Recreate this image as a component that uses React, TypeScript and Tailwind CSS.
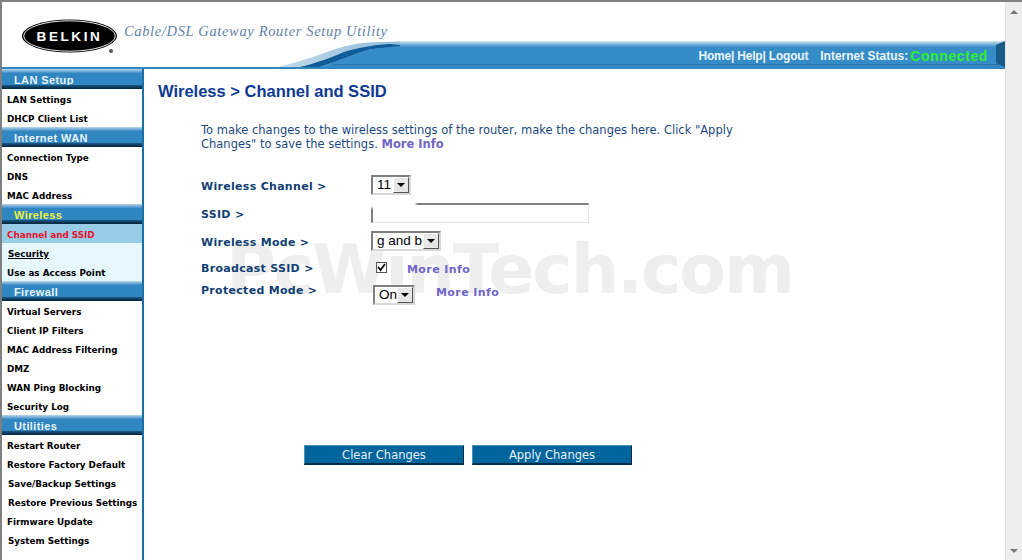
import React from "react";

const verdana = "font-['DejaVu_Sans',sans-serif]";

type Item = { label: string; active?: boolean; underline?: boolean; tint?: boolean; indent?: boolean };

const sections: { title: string; current?: boolean; items: Item[] }[] = [
  { title: "LAN Setup", items: [{ label: "LAN Settings" }, { label: "DHCP Client List" }] },
  {
    title: "Internet WAN",
    items: [{ label: "Connection Type" }, { label: "DNS" }, { label: "MAC Address" }],
  },
  {
    title: "Wireless",
    current: true,
    items: [
      { label: "Channel and SSID", active: true },
      { label: "Security", underline: true, tint: true, indent: true },
      { label: "Use as Access Point", tint: true },
    ],
  },
  {
    title: "Firewall",
    items: [
      { label: "Virtual Servers" },
      { label: "Client IP Filters" },
      { label: "MAC Address Filtering" },
      { label: "DMZ" },
      { label: "WAN Ping Blocking" },
      { label: "Security Log" },
    ],
  },
  {
    title: "Utilities",
    items: [
      { label: "Restart Router" },
      { label: "Restore Factory Default" },
      { label: "Save/Backup Settings", indent: true },
      { label: "Restore Previous Settings", indent: true },
      { label: "Firmware Update" },
      { label: "System Settings", indent: true },
    ],
  },
];

function SectionHeader({ title, current }: { title: string; current?: boolean }) {
  return (
    <div className="h-[20px] flex flex-col">
      <div className="h-[4px] bg-gradient-to-b from-[#b9d6ea] to-[#3a8cc6]" />
      <div
        className={`h-[12px] bg-[#2f86c0] pl-[12px] pt-[2px] flex items-center font-['Liberation_Sans',sans-serif] font-bold text-[11px] tracking-[0.4px] ${
          current ? "text-[#f2f53c]" : "text-[#e8f3fa]"
        }`}
      >
        {title}
      </div>
      <div className="h-[4px] bg-gradient-to-b from-[#1a5a86] to-[#04233a]" />
    </div>
  );
}

function NavItem({ label, active, underline, tint, indent }: Item) {
  return (
    <div
      className={`h-[19px] pt-[4px] flex items-center whitespace-nowrap text-[8.8px] font-bold leading-none ${verdana} ${
        indent ? "pl-[6px]" : "pl-[5px]"
      } ${active ? "bg-[#98cbe6] text-[#e8102a]" : tint ? "bg-[#e6f7fe] text-black" : "bg-white text-black"} ${
        underline ? "underline" : ""
      }`}
    >
      {label}
    </div>
  );
}

function FakeSelect({ value, w }: { value: string; w: string }) {
  return (
    <div
      className={`h-[20px] ${w} flex items-center justify-between border-2 border-t-[#808080] border-l-[#808080] border-r-[#d8d8d8] border-b-[#d8d8d8] bg-white pl-[4px] font-['Liberation_Sans',sans-serif] text-[13.5px] text-black`}
    >
      <span className="leading-none">{value}</span>
      <span className="w-[16px] h-[16px] bg-[#e6e6e6] border border-t-white border-l-white border-r-[#555] border-b-[#555] flex items-center justify-center">
        <svg width="8" height="4" viewBox="0 0 8 4">
          <path d="M0 0h8L4 4z" fill="#000" />
        </svg>
      </span>
    </div>
  );
}

function FormRow({ label, h, children }: { label: string; h: string; children: React.ReactNode }) {
  return (
    <div className={`flex items-center ${h}`}>
      <div className={`w-[169px] flex-none text-[11px] font-bold tracking-[0.3px] text-[#123f73] ${verdana}`}>
        {label}
      </div>
      {children}
    </div>
  );
}

function MoreInfo() {
  return <span className={`text-[11px] font-bold tracking-[0.4px] text-[#6f66c8] ${verdana}`}>More Info</span>;
}

function ActionButton({ label }: { label: string }) {
  return (
    <button
      className={`w-[160px] h-[20px] pt-[3px] bg-[#00659c] border border-t-[#4a90b8] border-l-[#4a90b8] border-r-[#062c45] border-b-[#062c45] border-b-2 text-[11.5px] leading-none text-[#e8f2f8] ${verdana}`}
    >
      {label}
    </button>
  );
}

export default function App() {
  return (
    <div className="w-[1022px] h-[560px] overflow-hidden bg-white flex border-t-2 border-[#808080]">
      <div className="flex-1 min-w-0 flex flex-col border-l-2 border-[#808080]">
        {/* Header */}
        <header className="relative h-[67px] flex-none bg-white flex border-b-2 border-[#2f86c0]">
          <svg className="absolute left-[270px] bottom-0" width="733" height="26" viewBox="0 0 733 26">
            <defs>
              <linearGradient id="bandTop" x1="0" y1="0" x2="0" y2="1">
                <stop offset="0" stopColor="#d5e6f2" />
                <stop offset="1" stopColor="#358cc6" />
              </linearGradient>
              <linearGradient id="swooshEdge" x1="0" y1="0" x2="1" y2="0">
                <stop offset="0" stopColor="#c4dAea" />
                <stop offset="1" stopColor="#8fbbdb" />
              </linearGradient>
            </defs>
            <path d="M5 26C20 23 38 17 52 12C68 6 80 3 95 1.5L128 0.5V26Z" fill="url(#swooshEdge)" />
            <path d="M28 26C45 22 60 16 72 11C85 7 100 4 118 3L128 4V6L100 8C90 10 75 17 48 26Z" fill="#0f5c99" />
            <path d="M48 26C75 17 90 10 100 8L128 5V26Z" fill="#358cc6" />
            <rect x="128" y="0" width="605" height="6" fill="url(#bandTop)" />
            <rect x="128" y="6" width="605" height="20" fill="#358cc6" />
            <rect x="60" y="23" width="673" height="1.5" fill="#2a78ae" />
            <path d="M724 4L733 0V26L724 22Z" fill="#1a5a86" />
          </svg>
          <div className="ml-[20px] mt-[17px] flex-none">
            <svg width="96" height="35" viewBox="0 0 96 35">
              <ellipse cx="47.5" cy="17" rx="47.5" ry="16.5" fill="#000" />
              <ellipse cx="47.5" cy="17" rx="45.8" ry="15.2" fill="none" stroke="#fff" strokeWidth="0.9" />
              <text
                x="47.5"
                y="22"
                textAnchor="middle"
                fontFamily="Liberation Sans, sans-serif"
                fontWeight="700"
                fontSize="13.5"
                letterSpacing="2.6"
                fill="#fff"
              >
                BELKIN
              </text>
              <circle cx="89" cy="32" r="2" fill="#555" />
            </svg>
          </div>
          <div className="ml-[6px] mt-[20px] h-[18px] font-['Liberation_Serif',serif] italic text-[14.5px] tracking-[0.65px] leading-[18px] text-[#5f83a8] whitespace-nowrap">
            Cable/DSL Gateway Router Setup Utility
          </div>
          <div className="relative ml-auto mt-[45px] mr-[17px] h-[18px] flex items-center font-['Liberation_Sans',sans-serif] font-bold text-[12px] text-[#eaf4fb] whitespace-nowrap">
            <span className="tracking-[-0.2px]">Home| Help| Logout</span>
            <span className="ml-[12px]">Internet Status:</span>
            <span className="ml-[2px] text-[14px] tracking-[0.6px] text-[#2ef02e]">Connected</span>
          </div>
        </header>

        <div className="flex-1 min-h-0 flex">
          {/* Sidebar */}
          <nav className="w-[142px] flex-none bg-white border-r-2 border-[#1b6fa6] flex flex-col">
            {sections.map((s) => (
              <div key={s.title}>
                <SectionHeader title={s.title} current={s.current} />
                {s.items.map((it) => (
                  <NavItem key={it.label} {...it} />
                ))}
              </div>
            ))}
          </nav>

          {/* Content */}
          <main className="relative flex-1 min-w-0">
            {/* watermark */}
            <div
              className={`absolute left-[82px] top-[167px] pointer-events-none text-[68px] font-bold tracking-[-2px] leading-none whitespace-nowrap text-[#eeeeee] ${verdana}`}
            >
              PcWinTech.com
            </div>
            <div className="relative pl-[14px]">
              <h1 className="pt-[12px] h-[32px] font-['Liberation_Sans',sans-serif] font-bold text-[16.5px] leading-[20px] text-[#0d3a94]">
                Wireless &gt; Channel and SSID
              </h1>
              <div className="pl-[43px]">
                <p className={`mt-[22px] w-[560px] text-[11.5px] leading-[14px] text-[#1c4a80] ${verdana}`}>
                  To make changes to the wireless settings of the router, make the changes here. Click "Apply Changes" to
                  save the settings. <span className="font-bold text-[#6f66c8]">More Info</span>
                </p>
                <div className="mt-[26px]">
                  <FormRow label="Wireless Channel >" h="h-[20px]">
                    <div className="ml-[1px] -mt-[4px]">
                      <FakeSelect value="11" w="w-[40px]" />
                    </div>
                  </FormRow>
                  <FormRow label="SSID >" h="h-[36px]">
                    <div className="relative ml-[1px] -mt-[4px] w-[218px] h-[20px] bg-white border-t-2 border-l-2 border-r border-b border-t-[#808080] border-l-[#808080] border-r-[#e4e4e4] border-b-[#e4e4e4]">
                      <div className="absolute -left-[3px] -top-[4px] w-[46px] h-[7px] bg-white blur-[1px]" />
                    </div>
                  </FormRow>
                  <FormRow label="Wireless Mode >" h="h-[20px]">
                    <div className="ml-[1px] -mt-[4px]">
                      <FakeSelect value="g and b" w="w-[70px]" />
                    </div>
                  </FormRow>
                  <FormRow label="Broadcast SSID >" h="h-[32px]">
                    <div className="ml-[6px] -mt-[3px] w-[11px] h-[11px] bg-white border border-[#555] flex items-center justify-center">
                      <svg width="9" height="9" viewBox="0 0 9 9">
                        <path d="M1 4l2.5 3L8 1" fill="none" stroke="#000" strokeWidth="1.8" />
                      </svg>
                    </div>
                    <div className="ml-[20px] -mt-[4px]">
                      <MoreInfo />
                    </div>
                  </FormRow>
                  <FormRow label="Protected Mode >" h="h-[12px]">
                    <div className="ml-[3px] mt-[8px]">
                      <FakeSelect value="On" w="w-[42px]" />
                    </div>
                    <div className="ml-[21px] -mt-[3px]">
                      <MoreInfo />
                    </div>
                  </FormRow>
                </div>
              </div>
            </div>
            <div className="absolute left-[160px] top-[376px] flex gap-[8px]">
              <ActionButton label="Clear Changes" />
              <ActionButton label="Apply Changes" />
            </div>
          </main>
        </div>
      </div>

      {/* Scrollbar */}
      <div className="w-[17px] flex-none bg-[#eeeeee] border-l border-[#e4e4e4] flex flex-col items-center justify-between pt-[8px] pb-[7px]">
        <svg width="8" height="4" viewBox="0 0 8 4">
          <path d="M4 0l4 4H0z" fill="#777" />
        </svg>
        <svg width="8" height="4" viewBox="0 0 8 4">
          <path d="M0 0h8L4 4z" fill="#777" />
        </svg>
      </div>
    </div>
  );
}
